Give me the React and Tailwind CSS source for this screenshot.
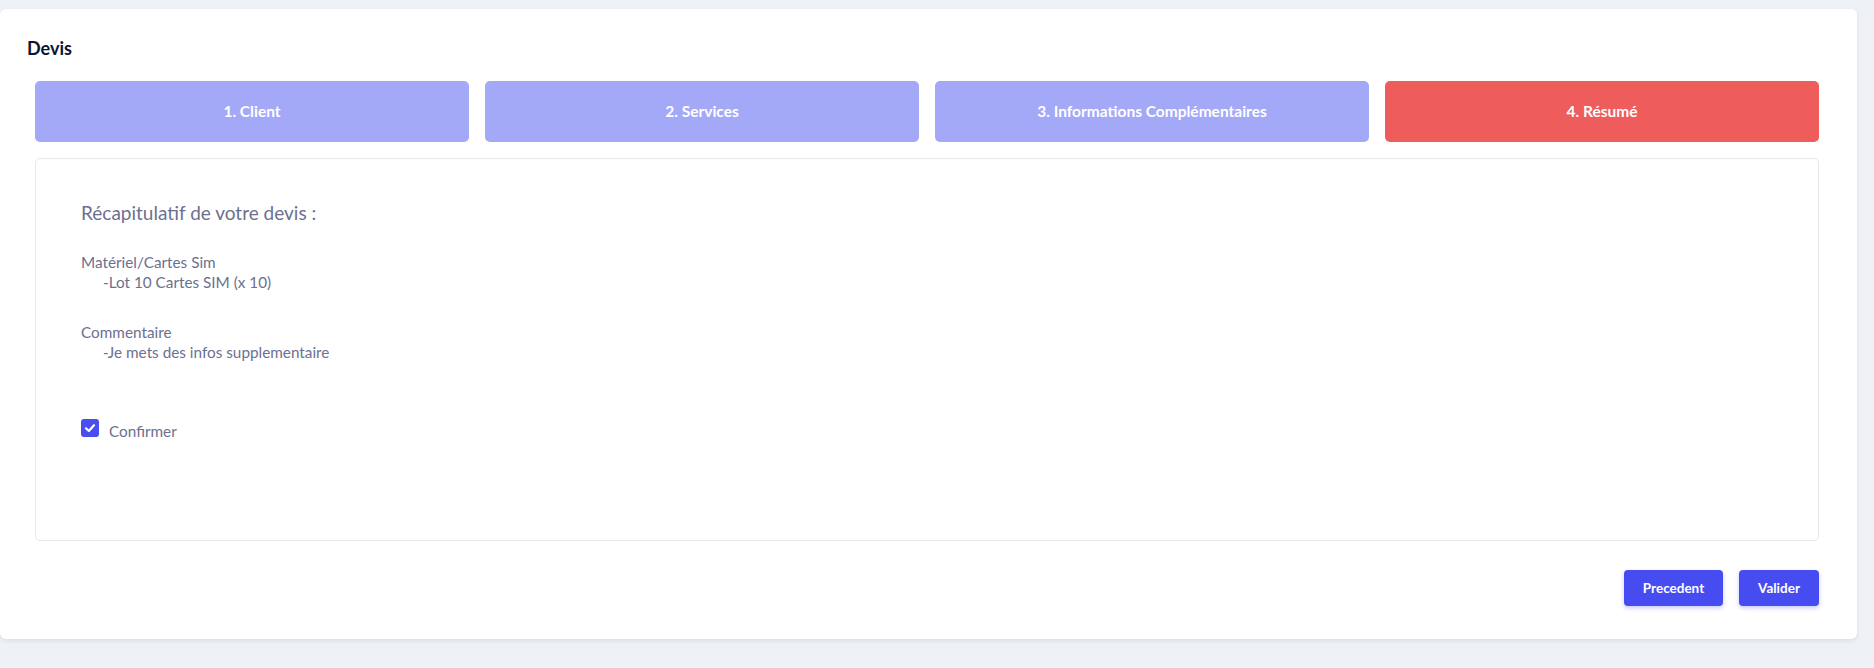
export default function App() {
  const steps = [
    { label: "1. Client", active: false },
    { label: "2. Services", active: false },
    { label: "3. Informations Complémentaires", active: false },
    { label: "4. Résumé", active: true },
  ];

  return (
    <div
      className="w-[1874px] h-[668px] bg-[#eef1f5] pt-[9px] overflow-hidden"
      style={{ fontFamily: "'Source Sans Pro', Lato, 'Liberation Sans', sans-serif" }}
    >
      <div className="w-[1857px] h-[630px] bg-white rounded-[6px] shadow-[0_2px_4px_rgba(0,0,0,0.08)] flex flex-col">
        <div className="pl-[27px] pt-[27px] text-[18px] leading-[24px] font-bold text-[#0b1437]">
          Devis
        </div>

        <div className="pl-[35px] pr-[38px] pt-[21px] flex flex-col">
          <div className="grid grid-cols-4 gap-[16px]">
            {steps.map((s) => (
              <div
                key={s.label}
                className={`h-[61px] rounded-[5px] flex items-center justify-center text-white font-bold text-[15.5px] ${
                  s.active ? "bg-[#ee5c5c]" : "bg-[#a3a8f7]"
                }`}
              >
                {s.label}
              </div>
            ))}
          </div>

          <div className="mt-[16px] h-[383px] border border-[#e6e8ec] rounded-[5px] pl-[45px] pt-[40px] text-[#6c7090]">
            <div className="text-[19px] leading-[28px]">Récapitulatif de votre devis :</div>

            <div className="mt-[25px] text-[15.3px] leading-[20px]">
              <div>Matériel/Cartes Sim</div>
              <div className="pl-[22px]">-Lot 10 Cartes SIM (x 10)</div>
            </div>

            <div className="mt-[30px] text-[15.3px] leading-[20px]">
              <div>Commentaire</div>
              <div className="pl-[22px]">-Je mets des infos supplementaire</div>
            </div>

            <label className="mt-[53px] flex items-center gap-[10px] text-[15.3px] leading-[20px]">
              <span className="w-[18px] h-[18px] rounded-[3px] bg-[#4a4ef0] flex items-center justify-center">
                <svg width="12" height="12" viewBox="0 0 12 12" fill="none">
                  <path d="M2 6.3 L4.8 9 L10 3.2" stroke="white" strokeWidth="2.2" strokeLinecap="round" strokeLinejoin="round" />
                </svg>
              </span>
              <span className="mt-[6px]">Confirmer</span>
            </label>
          </div>

          <div className="mt-[29px] flex justify-end gap-[16px]">
            <button className="h-[36px] w-[99px] rounded-[4px] bg-[#464cef] text-white font-bold text-[13.5px] shadow-[0_2px_4px_rgba(70,76,239,0.3)]">
              Precedent
            </button>
            <button className="h-[36px] w-[80px] rounded-[4px] bg-[#464cef] text-white font-bold text-[13.5px] shadow-[0_2px_4px_rgba(70,76,239,0.3)]">
              Valider
            </button>
          </div>
        </div>
      </div>
    </div>
  );
}
